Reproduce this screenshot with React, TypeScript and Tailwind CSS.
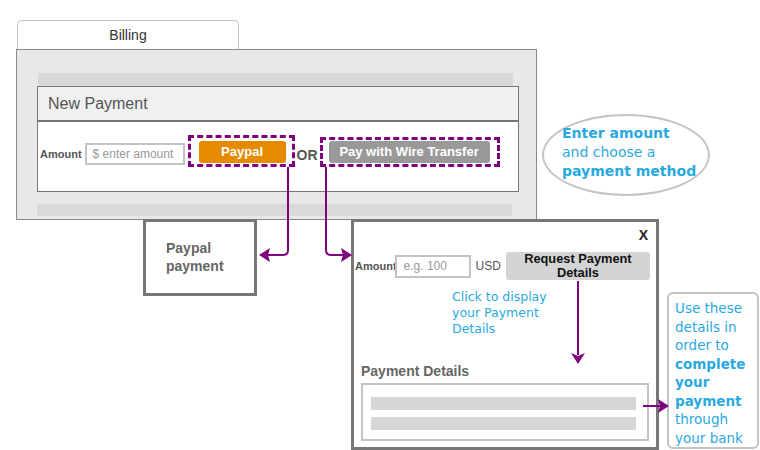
const hand = "font-['DejaVu_Sans',sans-serif] text-[#2aa9e0]";

function Arrows() {
  return (
    <svg className="absolute left-0 top-0 pointer-events-none" width="760" height="450" viewBox="0 0 760 450">
      <g fill="none" stroke="#800080" strokeWidth="2">
        <path d="M288 167 V250 Q288 255 283 255 H267" />
        <path d="M326 167 V250 Q326 255 331 255 H344" />
        <path d="M578 281 V355" />
        <path d="M643 406 H660" />
      </g>
      <g fill="#800080">
        <polygon points="259,255 270,248 268,255 270,262" />
        <polygon points="352,255 341,248 343,255 341,262" />
        <polygon points="578,364 571,353 578,356 585,353" />
        <polygon points="669,406 658,399 660,406 658,413" />
      </g>
    </svg>
  );
}

function BillingPanel() {
  return (
    <div className="absolute left-[16px] top-[20px] w-[521px]">
      <div className="ml-[1px] flex h-[29px] w-[222px] items-center justify-center rounded-t-[5px] border border-b-0 border-[#c4c4c4] bg-white text-[14px] text-[#333]">
        Billing
      </div>
      <div className="h-[171px] border border-[#8a8a8a] bg-[#e8e8e8] pl-[20px] pt-[23px]">
        <div className="ml-[1px] h-[13px] w-[475px] bg-[#d9d9d9]" />
        <div className="flex h-[36px] w-[482px] items-center border border-b-2 border-[#777] bg-[#f0f0f0] pl-[10px] text-[16px] text-[#555]">
          New Payment
        </div>
        <div className="flex h-[70px] w-[482px] items-start border border-t-0 border-[#777] bg-white pl-[2px] pt-[13px]">
          <span className="mt-[11px] text-[11px] font-bold text-[#555]">Amount</span>
          <div className="ml-[3px] mt-[8px] flex h-[22px] w-[100px] items-center border-2 border-[#c4c4c4] pl-[6px] text-[12px] text-[#999]">
            $ enter amount
          </div>
          <div className="ml-[3px] h-[32px] w-[107px] border-[3px] border-dashed border-[#800080] pl-[8px] pt-[3px]">
            <div className="flex h-[22px] w-[87px] items-center justify-center rounded-[3px] bg-[#e68a00] text-[13px] font-bold text-white">
              Paypal
            </div>
          </div>
          <span className="ml-[2px] mt-[10px] text-[14px] font-bold text-[#555]">OR</span>
          <div className="ml-[2px] mt-[2px] h-[30px] w-[180px] border-[3px] border-dashed border-[#800080] pl-[6px] pt-[1px]">
            <div className="flex h-[22px] w-[161px] items-center justify-center rounded-[3px] bg-[#999] text-[13px] font-bold text-white">
              Pay with Wire Transfer
            </div>
          </div>
        </div>
        <div className="mt-[12px] h-[12px] w-[475px] bg-[#d9d9d9]" />
      </div>
    </div>
  );
}

function WireDialog() {
  return (
    <div className="absolute left-[351px] top-[219px] flex h-[231px] w-[308px] flex-col border-[3px] border-[#777] bg-white">
      <div className="flex justify-end pr-[8px] pt-[5px] text-[14px] font-bold leading-[16px] text-[#222]">X</div>
      <div className="mt-[9px] flex items-center pl-[1px]">
        <span className="text-[11px] font-bold text-[#555]">Amount</span>
        <div className="ml-[-2px] flex h-[23px] w-[76px] items-center border-2 border-[#c4c4c4] pl-[7px] text-[12px] text-[#999]">
          e.g. 100
        </div>
        <span className="ml-[5px] text-[12px] text-[#555]">USD</span>
        <div className="ml-[5px] flex h-[28px] w-[144px] flex-col items-center justify-center rounded-[3px] bg-[#d4d4d4] text-[12.8px] font-bold leading-[14px] text-[#111]">
          <span>Request Payment</span>
          <span>Details</span>
        </div>
      </div>
      <div className={`ml-[98px] mt-[9px] text-[12.5px] leading-[16px] ${hand}`}>
        Click to display
        <br />
        your Payment
        <br />
        Details
      </div>
      <div className="ml-[7px] mt-[24px] text-[14px] font-bold text-[#666]">Payment Details</div>
      <div className="ml-[7px] mt-[1px] flex h-[58px] w-[288px] flex-col gap-[7px] border-2 border-[#c4c4c4] pl-[8px] pt-[12px]">
        <div className="h-[13px] w-[265px] bg-[#d6d6d6]" />
        <div className="h-[13px] w-[265px] bg-[#d6d6d6]" />
      </div>
    </div>
  );
}

export default function App() {
  return (
    <div className="relative h-[450px] w-[760px] overflow-hidden bg-white font-['Liberation_Sans',Arial,sans-serif]">
      <BillingPanel />

      <div className="absolute left-[143px] top-[219px] h-[77px] w-[114px] border-[3px] border-[#777] bg-white pl-[20px] pt-[17px] text-[14px] font-bold leading-[18px] text-[#666]">
        Paypal
        <br />
        payment
      </div>

      <WireDialog />

      <div className="absolute left-[542px] top-[114px] h-[82px] w-[168px] rounded-[50%] border-2 border-[#c4c4c4] bg-white pl-[18px] pt-[8px]">
        <div className={`text-[14px] leading-[19px] ${hand}`}>
          <div className="font-bold">Enter amount</div>
          <div>and choose a</div>
          <div className="font-bold">payment method</div>
        </div>
      </div>

      <div className="absolute left-[667px] top-[292px] h-[157px] w-[92px] rounded-[6px] border-2 border-[#c4c4c4] bg-white pl-[6px] pt-[5px]">
        <div className={`text-[13.5px] leading-[18.5px] ${hand}`}>
          <div>Use these</div>
          <div>details in</div>
          <div>order to</div>
          <div className="font-bold">complete</div>
          <div className="font-bold">your</div>
          <div className="font-bold">payment</div>
          <div>through</div>
          <div>your bank</div>
        </div>
      </div>

      <Arrows />
    </div>
  );
}
